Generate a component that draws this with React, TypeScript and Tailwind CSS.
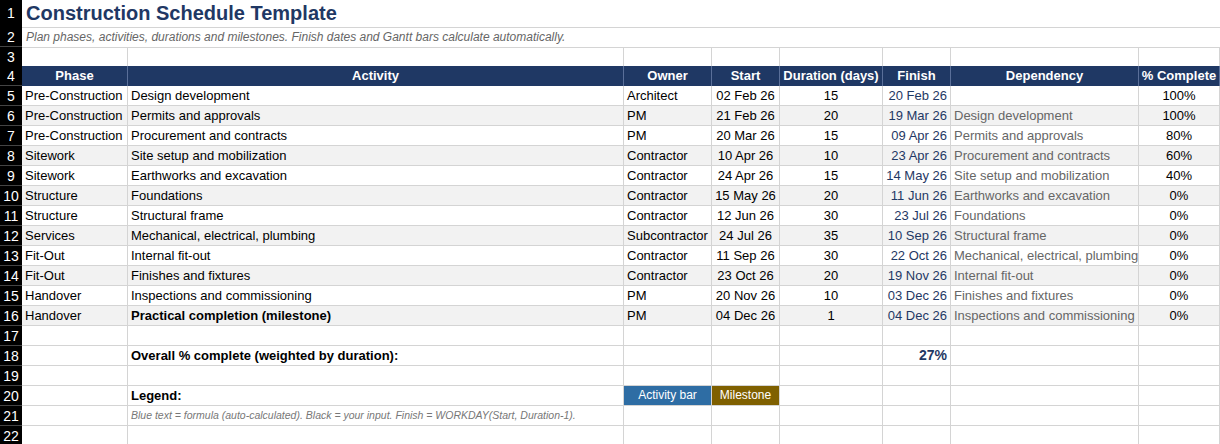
import React from "react";

const cols = "grid grid-cols-[22px_106px_496px_88px_68px_103px_68px_188px_81px]";
const rows: [string, string, string, string, number, string, string, string][] = [
  ["Pre-Construction", "Design development", "Architect", "02 Feb 26", 15, "20 Feb 26", "", "100%"],
  ["Pre-Construction", "Permits and approvals", "PM", "21 Feb 26", 20, "19 Mar 26", "Design development", "100%"],
  ["Pre-Construction", "Procurement and contracts", "PM", "20 Mar 26", 15, "09 Apr 26", "Permits and approvals", "80%"],
  ["Sitework", "Site setup and mobilization", "Contractor", "10 Apr 26", 10, "23 Apr 26", "Procurement and contracts", "60%"],
  ["Sitework", "Earthworks and excavation", "Contractor", "24 Apr 26", 15, "14 May 26", "Site setup and mobilization", "40%"],
  ["Structure", "Foundations", "Contractor", "15 May 26", 20, "11 Jun 26", "Earthworks and excavation", "0%"],
  ["Structure", "Structural frame", "Contractor", "12 Jun 26", 30, "23 Jul 26", "Foundations", "0%"],
  ["Services", "Mechanical, electrical, plumbing", "Subcontractor", "24 Jul 26", 35, "10 Sep 26", "Structural frame", "0%"],
  ["Fit-Out", "Internal fit-out", "Contractor", "11 Sep 26", 30, "22 Oct 26", "Mechanical, electrical, plumbing", "0%"],
  ["Fit-Out", "Finishes and fixtures", "Contractor", "23 Oct 26", 20, "19 Nov 26", "Internal fit-out", "0%"],
  ["Handover", "Inspections and commissioning", "PM", "20 Nov 26", 10, "03 Dec 26", "Finishes and fixtures", "0%"],
  ["Handover", "Practical completion (milestone)", "PM", "04 Dec 26", 1, "04 Dec 26", "Inspections and commissioning", "0%"],
];

const C = "border-r border-b border-[#d4d4d4] px-[3px] h-[20px] leading-[19px] whitespace-nowrap overflow-hidden";
const RH = "bg-black text-white text-center border-b border-[#444] h-[20px] leading-[20px] text-[14px]";

function Empty({ n }: { n: number }) {
  return (
    <div className={`${cols} h-[20px]`}>
      <div className={RH}>{n}</div>
      {Array.from({ length: 8 }).map((_, i) => <div key={i} className={C}></div>)}
    </div>
  );
}

export default function App() {
  return (
    <div className="w-[1220px] h-[444px] overflow-hidden bg-white text-[13px] text-black" style={{ fontFamily: '"Liberation Sans", Arial, sans-serif' }}>
      <div className="grid grid-cols-[22px_1fr] h-[27px]">
        <div className="bg-black text-white text-center leading-[27px] text-[14px] border-b border-[#444]">1</div>
        <div className="border-b border-[#d4d4d4] px-[4px] text-[20px] font-bold text-[#1f3864] leading-[26px]">Construction Schedule Template</div>
      </div>
      <div className="grid grid-cols-[22px_1fr] h-[20px]">
        <div className={RH}>2</div>
        <div className="border-b border-[#d4d4d4] px-[4px] italic text-[#666] text-[12px] leading-[20px]">Plan phases, activities, durations and milestones. Finish dates and Gantt bars calculate automatically.</div>
      </div>
      <div className={`${cols} h-[19px]`}>
        <div className={`${RH} h-[19px] leading-[19px]`}>3</div>
        {Array.from({ length: 8 }).map((_, i) => <div key={i} className={`${C} h-[19px]`}></div>)}
      </div>
      <div className={`${cols} h-[20px]`}>
        <div className={RH}>4</div>
        {["Phase", "Activity", "Owner", "Start", "Duration (days)", "Finish", "Dependency", "% Complete"].map((h) => (
          <div key={h} className="bg-[#1f3864] text-white font-bold text-center border-r border-[#5a6f99] h-[20px] leading-[20px] whitespace-nowrap overflow-hidden">{h}</div>
        ))}
      </div>
      {rows.map((r, i) => {
        const bg = i % 2 === 1 ? "bg-[#f2f2f2]" : "bg-white";
        const last = i === rows.length - 1;
        return (
          <div key={i} className={`${cols} h-[20px] ${bg}`}>
            <div className={RH}>{i + 5}</div>
            <div className={C}>{r[0]}</div>
            <div className={`${C} ${last ? "font-bold" : ""}`}>{r[1]}</div>
            <div className={C}>{r[2]}</div>
            <div className={`${C} text-center`}>{r[3]}</div>
            <div className={`${C} text-center`}>{r[4]}</div>
            <div className={`${C} text-right text-[#1f3864]`}>{r[5]}</div>
            <div className={`${C} text-[#666]`}>{r[6]}</div>
            <div className={`${C} text-center`}>{r[7]}</div>
          </div>
        );
      })}
      <Empty n={17} />
      <div className={`${cols} h-[20px]`}>
        <div className={RH}>18</div>
        <div className={C}></div>
        <div className={`${C} font-bold`}>Overall % complete (weighted by duration):</div>
        <div className={C}></div>
        <div className={C}></div>
        <div className={C}></div>
        <div className={`${C} text-right font-bold text-[#1f3864] text-[14px]`}>27%</div>
        <div className={C}></div>
        <div className={C}></div>
      </div>
      <Empty n={19} />
      <div className={`${cols} h-[20px]`}>
        <div className={RH}>20</div>
        <div className={C}></div>
        <div className={`${C} font-bold`}>Legend:</div>
        <div className={`${C} bg-[#2e6da4] text-white text-[12px] text-center`}>Activity bar</div>
        <div className={`${C} bg-[#7f6000] text-white text-[12px] text-center`}>Milestone</div>
        <div className={C}></div>
        <div className={C}></div>
        <div className={C}></div>
        <div className={C}></div>
      </div>
      <div className={`${cols} h-[20px]`}>
        <div className={RH}>21</div>
        <div className={C}></div>
        <div className={`${C} overflow-visible italic text-[#777] text-[10.5px]`}>Blue text = formula (auto-calculated). Black = your input. Finish = WORKDAY(Start, Duration-1).</div>
        {Array.from({ length: 6 }).map((_, i) => <div key={i} className={C}></div>)}
      </div>
      <Empty n={22} />
    </div>
  );
}
